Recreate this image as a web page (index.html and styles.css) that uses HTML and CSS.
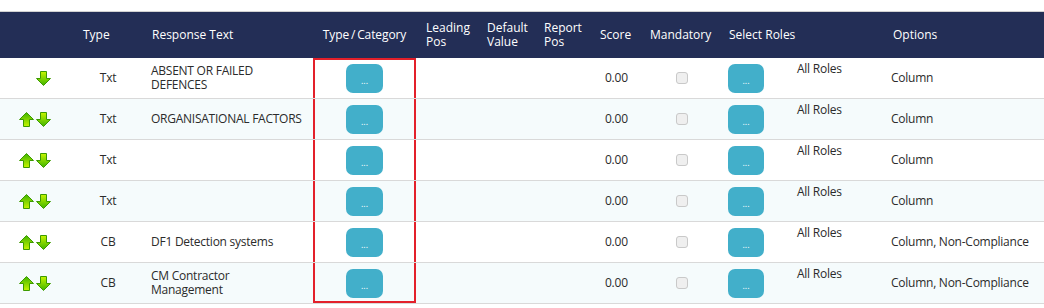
FILE: index.html
```html
<!DOCTYPE html>
<html lang="en">
<head>
    <meta charset="UTF-8">
    <meta name="viewport" content="width=device-width, initial-scale=1.0">
    <title>Responses</title>
    <link rel="stylesheet" href="styles.css">
</head>
<body>
    <div class="topo"></div>
    <table class="respostas">
        <colgroup>
            <col style="width:70px">
            <col style="width:76px">
            <col style="width:167px">
            <col style="width:103px">
            <col style="width:66px">
            <col style="width:57px">
            <col style="width:56px">
            <col style="width:50px">
            <col style="width:73px">
            <col style="width:69px">
            <col style="width:94px">
            <col>
        </colgroup>
        <thead>
            <tr>
                <th></th>
                <th class="h-type">Type</th>
                <th class="h-text">Response Text</th>
                <th class="h-cat">Type&thinsp;/&thinsp;Category</th>
                <th class="h-lead">Leading<br>Pos</th>
                <th class="h-small">Default<br>Value</th>
                <th class="h-small">Report<br>Pos</th>
                <th class="h-small">Score</th>
                <th class="h-small">Mandatory</th>
                <th class="h-roles" colspan="2">Select Roles</th>
                <th class="h-opt">Options</th>
            </tr>
        </thead>
        <tbody>
            <tr>
                <td class="setas"><span class="seta sumida"><svg width="15" height="15" viewBox="0 0 15 15"><use href="#up"/></svg></span><span class="seta"><svg width="15" height="15" viewBox="0 0 15 15"><use href="#down"/></svg></span></td>
                <td class="tipo">Txt</td>
                <td class="texto">ABSENT OR FAILED<br>DEFENCES</td>
                <td class="cat primeiro"><button class="btn">...</button></td>
                <td></td><td></td><td></td>
                <td class="score">0.00</td>
                <td class="mand"><input type="checkbox" disabled></td>
                <td class="roles-btn"><button class="btn">...</button></td>
                <td class="roles">All Roles</td>
                <td class="opt">Column</td>
            </tr>
            <tr>
                <td class="setas"><span class="seta"><svg width="15" height="15" viewBox="0 0 15 15"><use href="#up"/></svg></span><span class="seta"><svg width="15" height="15" viewBox="0 0 15 15"><use href="#down"/></svg></span></td>
                <td class="tipo">Txt</td>
                <td class="texto">ORGANISATIONAL FACTORS</td>
                <td class="cat"><button class="btn">...</button></td>
                <td></td><td></td><td></td>
                <td class="score">0.00</td>
                <td class="mand"><input type="checkbox" disabled></td>
                <td class="roles-btn"><button class="btn">...</button></td>
                <td class="roles">All Roles</td>
                <td class="opt">Column</td>
            </tr>
            <tr>
                <td class="setas"><span class="seta"><svg width="15" height="15" viewBox="0 0 15 15"><use href="#up"/></svg></span><span class="seta"><svg width="15" height="15" viewBox="0 0 15 15"><use href="#down"/></svg></span></td>
                <td class="tipo">Txt</td>
                <td class="texto"></td>
                <td class="cat"><button class="btn">...</button></td>
                <td></td><td></td><td></td>
                <td class="score">0.00</td>
                <td class="mand"><input type="checkbox" disabled></td>
                <td class="roles-btn"><button class="btn">...</button></td>
                <td class="roles">All Roles</td>
                <td class="opt">Column</td>
            </tr>
            <tr>
                <td class="setas"><span class="seta"><svg width="15" height="15" viewBox="0 0 15 15"><use href="#up"/></svg></span><span class="seta"><svg width="15" height="15" viewBox="0 0 15 15"><use href="#down"/></svg></span></td>
                <td class="tipo">Txt</td>
                <td class="texto"></td>
                <td class="cat"><button class="btn">...</button></td>
                <td></td><td></td><td></td>
                <td class="score">0.00</td>
                <td class="mand"><input type="checkbox" disabled></td>
                <td class="roles-btn"><button class="btn">...</button></td>
                <td class="roles">All Roles</td>
                <td class="opt">Column</td>
            </tr>
            <tr>
                <td class="setas"><span class="seta"><svg width="15" height="15" viewBox="0 0 15 15"><use href="#up"/></svg></span><span class="seta"><svg width="15" height="15" viewBox="0 0 15 15"><use href="#down"/></svg></span></td>
                <td class="tipo">CB</td>
                <td class="texto">DF1 Detection systems</td>
                <td class="cat"><button class="btn">...</button></td>
                <td></td><td></td><td></td>
                <td class="score">0.00</td>
                <td class="mand"><input type="checkbox" disabled></td>
                <td class="roles-btn"><button class="btn">...</button></td>
                <td class="roles">All Roles</td>
                <td class="opt">Column, Non-Compliance</td>
            </tr>
            <tr>
                <td class="setas"><span class="seta"><svg width="15" height="15" viewBox="0 0 15 15"><use href="#up"/></svg></span><span class="seta"><svg width="15" height="15" viewBox="0 0 15 15"><use href="#down"/></svg></span></td>
                <td class="tipo">CB</td>
                <td class="texto">CM Contractor<br>Management</td>
                <td class="cat ultimo"><button class="btn">...</button></td>
                <td></td><td></td><td></td>
                <td class="score">0.00</td>
                <td class="mand"><input type="checkbox" disabled></td>
                <td class="roles-btn"><button class="btn">...</button></td>
                <td class="roles">All Roles</td>
                <td class="opt">Column, Non-Compliance</td>
            </tr>
        </tbody>
    </table>

    <!-- setas verdes -->
    <svg width="0" height="0" class="defs">
        <defs>
            <linearGradient id="verde" x1="0" y1="0" x2="0" y2="1">
                <stop offset="0" stop-color="#c6f500"/>
                <stop offset="1" stop-color="#3fb400"/>
            </linearGradient>
            <linearGradient id="verde2" x1="0" y1="1" x2="0" y2="0">
                <stop offset="0" stop-color="#c6f500"/>
                <stop offset="1" stop-color="#3fb400"/>
            </linearGradient>
            <polygon id="up" points="7.5,0.5 14.5,7.5 10.5,7.5 10.5,14.5 4.5,14.5 4.5,7.5 0.5,7.5" fill="url(#verde2)" stroke="#3c9a00" stroke-width="1" stroke-linejoin="miter"/>
            <polygon id="down" points="7.5,14.5 14.5,7.5 10.5,7.5 10.5,0.5 4.5,0.5 4.5,7.5 0.5,7.5" fill="url(#verde)" stroke="#3c9a00" stroke-width="1" stroke-linejoin="miter"/>
        </defs>
    </svg>
</body>
</html>
```

FILE: styles.css
```css
body,html{
    margin: 0;
    font-family: 'Open Sans', 'Liberation Sans', Arial, sans-serif;
    font-size: 12px;
    color: #2b2b2b;
    background: #fff;
}
.topo{
    height: 11px;
}
.defs{
    position: absolute;
}
.respostas{
    width: 100%;
    table-layout: fixed;
    border-collapse: separate;
    border-spacing: 0;
    border-top: 1px solid #d2d2d2;
}
.respostas th{
    background-color: #232e56;
    color: #fff;
    font-weight: normal;
    height: 46px;
    padding: 0 5px;
    text-align: left;
    line-height: 14px;
    vertical-align: middle;
}
.h-type{
    padding-left: 13px !important;
}
.h-text{
    padding-left: 6px !important;
}
.h-cat{
    text-align: center !important;
    padding: 0 !important;
    letter-spacing: -0.1px;
}
.h-lead{
    padding-left: 10px !important;
}
.h-roles{
    padding-left: 11px !important;
}
.h-opt{
    padding-left: 12px !important;
}
.respostas td{
    height: 41px;
    box-sizing: border-box;
    padding: 0 5px;
    border-bottom: 1px solid #d9d9d9;
    vertical-align: middle;
    line-height: 14px;
    letter-spacing: -0.25px;
}
.respostas tbody tr:nth-child(even) td{
    background-color: #f5fbfc;
}
.setas{
    text-align: center;
    font-size: 0;
    line-height: 0 !important;
    padding: 0 !important;
}
.seta{
    display: inline-block;
    margin: 0 1px;
    vertical-align: middle;
}
.seta svg{
    display: block;
}
.sumida{
    visibility: hidden;
}
.tipo{
    text-align: center;
}
.texto{
    padding-right: 0 !important;
}
.cat{
    box-shadow: inset 2px 0 #e3202a, inset -2px 0 #e3202a;
}
.cat.primeiro{
    box-shadow: inset 2px 0 #e3202a, inset -2px 0 #e3202a, inset 0 2px #e3202a;
}
.cat.ultimo{
    box-shadow: inset 2px 0 #e3202a, inset -2px 0 #e3202a, inset 0 -2px #e3202a;
}
.btn{
    display: block;
    margin: 0 auto;
    width: 37px;
    height: 29px;
    border: none;
    border-radius: 7px;
    background-color: #42afca;
    color: #fff;
    font-family: 'Open Sans', Arial, sans-serif;
    font-size: 9px;
    padding: 6px 0 0 0;
    line-height: 10px;
}
.score{
    padding-left: 10px !important;
}
.mand input{
    display: block;
    -webkit-appearance: none;
    appearance: none;
    width: 12px;
    height: 12px;
    margin: 0 auto;
    border: 1px solid #c9c9c9;
    border-radius: 3px;
    background-color: #efefef;
}
.roles-btn{
    padding-left: 10px !important;
}
.roles-btn .btn{
    width: 36px;
    margin: 0;
}
.roles{
    vertical-align: top !important;
    padding-top: 4px !important;
    padding-left: 10px !important;
}
.opt{
    padding-left: 10px !important;
    white-space: nowrap;
}
```
